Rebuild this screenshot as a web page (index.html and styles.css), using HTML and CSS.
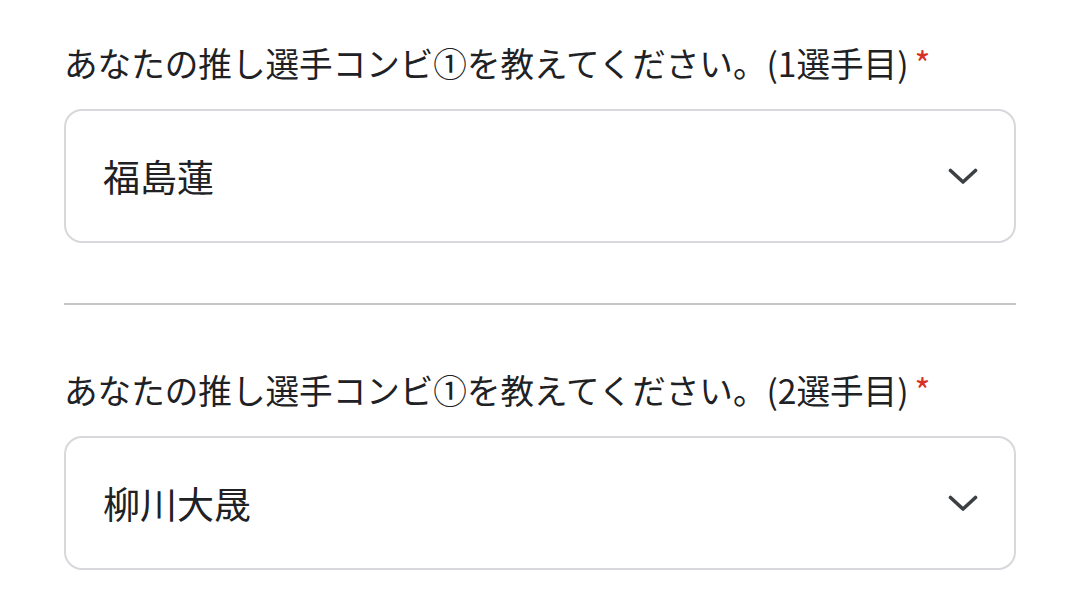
FILE: index.html
```html
<!DOCTYPE html>
<html lang="ja">
<head>
    <meta charset="utf-8">
    <title>推し選手アンケート</title>
    <meta name="viewport" content="width=device-width, initial-scale=1.0">
    <link rel="stylesheet" href="styles.css">
</head>
<body>
    <div class="form">
        <div class="question">
            <div class="question-title">あなたの推し選手コンビ①を教えてください。(1選手目)<span class="required">*</span></div>
            <div class="select">
                <span class="select-value">福島蓮</span>
                <svg class="chevron" viewBox="0 0 30 17" width="30" height="17">
                    <path d="M2.5 2.5 L15 14 L27.5 2.5" fill="none" stroke="currentColor" stroke-width="3.6" stroke-linecap="round" stroke-linejoin="round"/>
                </svg>
            </div>
        </div>

        <hr class="divider">

        <div class="question">
            <div class="question-title">あなたの推し選手コンビ①を教えてください。(2選手目)<span class="required">*</span></div>
            <div class="select">
                <span class="select-value">柳川大晟</span>
                <svg class="chevron" viewBox="0 0 30 17" width="30" height="17">
                    <path d="M2.5 2.5 L15 14 L27.5 2.5" fill="none" stroke="currentColor" stroke-width="3.6" stroke-linecap="round" stroke-linejoin="round"/>
                </svg>
            </div>
        </div>
    </div>
</body>
</html>
```

FILE: styles.css
```css
body {
    margin: 0;
    background: #fff;
    color: #202124;
    font-family: "Noto Sans CJK JP", "Noto Sans", sans-serif;
}

.form {
    padding: 39px 63px 0 64px;
}

.question-title {
    font-size: 33.6px;
    line-height: 48px;
    margin-bottom: 22px;
}

.required {
    color: #d93025;
    font-size: 34px;
    margin-left: 6px;
}

.select {
    display: flex;
    align-items: center;
    justify-content: space-between;
    height: 130px;
    padding: 0 36px 0 37px;
    border: 2px solid #d6d8db;
    border-radius: 18px;
}

.select-value {
    font-size: 37px;
}

.chevron {
    color: #3c4043;
}

.divider {
    margin: 60px 0 61px;
    border: 0;
    border-top: 2px solid #c6c6c6;
}
```
